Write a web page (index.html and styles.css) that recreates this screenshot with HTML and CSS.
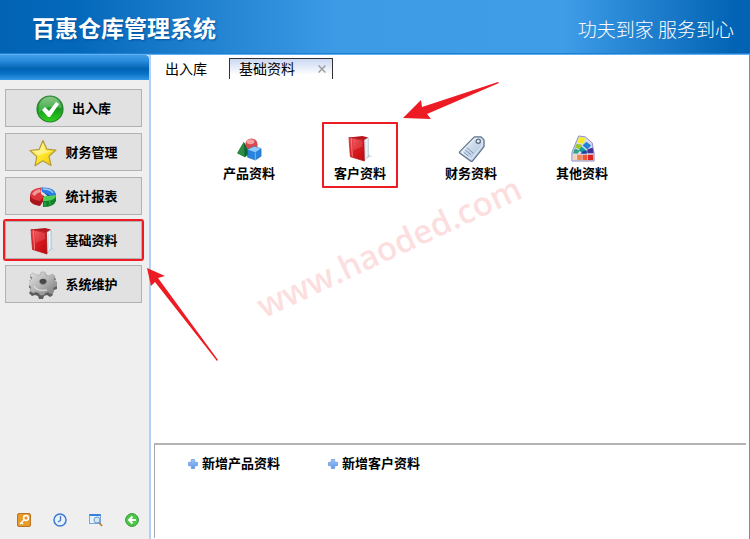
FILE: index.html
```html
<!DOCTYPE html>
<html lang="zh-CN">
<head>
<meta charset="utf-8">
<meta name="viewport" content="width=device-width, initial-scale=1">
<title>百惠仓库管理系统</title>
<link rel="stylesheet" href="styles.css">
</head>
<body>
<svg class="defs" width="0" height="0" aria-hidden="true">
  <defs>
    <linearGradient id="red" x1="0" y1="0" x2="1" y2="1"><stop offset="0" stop-color="#f0565a"/><stop offset=".45" stop-color="#dc1c22"/><stop offset="1" stop-color="#b80a10"/></linearGradient>
    <linearGradient id="green" x1="0" y1="0" x2="0" y2="1"><stop offset="0" stop-color="#6db96a"/><stop offset=".5" stop-color="#159a1c"/><stop offset="1" stop-color="#2cd41c"/></linearGradient>
    <linearGradient id="gold" x1="0" y1="0" x2="1" y2="1"><stop offset="0" stop-color="#fff79a"/><stop offset=".5" stop-color="#ffe72e"/><stop offset="1" stop-color="#f5c400"/></linearGradient>
    <linearGradient id="steel" x1="0" y1="0" x2="1" y2="1"><stop offset="0" stop-color="#e4e4e4"/><stop offset=".5" stop-color="#b5b5b5"/><stop offset="1" stop-color="#777"/></linearGradient>
    <linearGradient id="tag" x1="0" y1="0" x2="1" y2="1"><stop offset="0" stop-color="#eef4fb"/><stop offset="1" stop-color="#a3bcd8"/></linearGradient>
    <linearGradient id="plus" x1="0" y1="0" x2="0" y2="1"><stop offset="0" stop-color="#9cc6fb"/><stop offset="1" stop-color="#5b98ee"/></linearGradient>
    <symbol id="book" viewBox="0 0 28 28">
      <path d="M19 25l7-3-4-2z" fill="#d5d9de"/>
      <path d="M2 2.500L16 1l6 1.500-4 3z" fill="#b9161c"/>
      <path d="M17.500 5.500L22 3v19l-4 4z" fill="#f2f9fc" stroke="#8fb0bf" stroke-width=".7"/>
      <path d="M19.500 6v17" stroke="#bdd0da" stroke-width=".6"/>
      <path d="M2 2.500l15.500 3 .5 21.500L3.500 22.500z" fill="url(#red)" stroke="#b01016" stroke-width=".7" stroke-linejoin="round"/>
      <path d="M4.500 3.500l1 19" stroke="#f08a8c" stroke-width=".9"/>
      <path d="M6 4l10 2v6L6.500 16z" fill="#fff" opacity=".14"/>
    </symbol>
    <symbol id="plusmark" viewBox="0 0 10 10"><path d="M3.300.5h3.400v2.800h2.800v3.400H6.700v2.800H3.300V6.700H.5V3.300h2.800z" fill="url(#plus)" stroke="#6a95d8" stroke-width=".7" stroke-linejoin="round"/></symbol>
  </defs>
</svg>

<header class="banner">
  <h1>百惠仓库管理系统</h1>
  <p class="slogan">功夫到家 服务到心</p>
</header>

<div class="workspace">
  <aside class="sidebar">
    <div class="sidebar-cap"></div>
    <nav class="menu" aria-label="主菜单">
      <button type="button" class="menu-item">
        <svg viewBox="0 0 28 28"><circle cx="14" cy="14" r="13" fill="url(#green)" stroke="#2b7f34" stroke-width="1.200"/><path d="M3 13a11 11 0 0 1 22 0q-11-4-22 4z" fill="#fff" opacity=".22"/><path d="M6 15l3-3 4 4 7-9 3 2-9 13h-2z" fill="#fff"/></svg>
        <span>出入库</span>
      </button>
      <button type="button" class="menu-item">
        <svg viewBox="0 0 28 28"><path d="M14 1.500l3.700 8.600 9.200.9-6.900 6.300 2 9.200-8.200-4.700-7.800 5 1.800-9.200L1 11.500l9.200-1.200z" fill="url(#gold)" stroke="#b39a3c" stroke-width="1.200" stroke-linejoin="round"/><path d="M14 4l2.500 7.500 7 .8-14 4-5-4 6.500-1z" fill="#fff" opacity=".4"/></svg>
        <span>财务管理</span>
      </button>
      <button type="button" class="menu-item">
        <svg viewBox="0 0 28 28"><path d="M14 9q9 0 13 2v6q-3 1-5-1z" fill="#154aa8"/><path d="M12 4.500q13-1 15 6.500 0 3-2 4l-7-4-5-2z" fill="#2c7be4"/><path d="M14 6q8 0 10 4" fill="none" stroke="#a4d0ff" stroke-width="1.300"/><path d="M1 12v6q2 4 10 5l4-6v-4z" fill="#a8151b"/><path d="M12 4.500Q1 6 1 12q1 5 10 6l4-5-3-2z" fill="#dd353a"/><path d="M3 11q2-4 8-5l1 3q-5 1-6 4z" fill="#fff" opacity=".5"/><path d="M14 15v9q11 0 13-6v-5l-7 2z" fill="#11812a"/><path d="M14 15q1-3 5-2l8-1q0 6-13 6z" fill="#4fd055"/><path d="M16 19v4m5-5v4" stroke="#35b048" stroke-width="1.200"/></svg>
        <span>统计报表</span>
      </button>
      <button type="button" class="menu-item is-marked">
        <svg><use href="#book"/></svg>
        <span>基础资料</span>
      </button>
      <button type="button" class="menu-item">
        <svg viewBox="0 0 28 28"><path id="gear" d="M11 6l1-3h5l1 3 3 1 3-2 3 3-2 3 1 2 2 1v4l-3 1-2 2 1 3-3 2-3-2-3 1-1 3h-4l-1-3-3-1-3 1-3-3 2-3-1-2-2-1v-4l3-1 1-2-2-3 3-2 4 2z" fill="#5c5c5c"/><path d="M11 4l1-3h4l1 3 3 1 3-2 3 2-1 3 1 2 2 1v4l-3 1-1 2 1 3-3 2-3-2-3 1-1 2h-4l-1-2-3-1-3 1-3-2 1-3-1-2-2-1v-4l3-1 1-2-2-3 3-2 3 2z" fill="url(#steel)" stroke="#999" stroke-width=".5"/><ellipse cx="14" cy="10.500" rx="3.500" ry="2.700" fill="#484848"/><path d="M11 11.500q3 3 6 0v1.500q-3 2-6 0z" fill="#8a8a8a"/><path d="M5 15q3 6 13 4" fill="none" stroke="#f1f1f1" stroke-width="1.400" opacity=".6"/></svg>
        <span>系统维护</span>
      </button>
    </nav>
    <div class="tools">
      <button type="button" aria-label="密码"><svg viewBox="0 0 14 14"><rect x=".5" y=".5" width="13" height="13" rx="1.500" fill="#e99b27" stroke="#b67424"/><circle cx="9" cy="5" r="2.400" fill="none" stroke="#fff" stroke-width="1.500"/><path d="M7 7l-4 4M4.500 9.500l1.500 1.500" stroke="#fff" stroke-width="1.500"/></svg></button>
      <button type="button" aria-label="时间"><svg viewBox="0 0 14 14"><circle cx="7" cy="7" r="6" fill="#e6f3ff" stroke="#3b78d5" stroke-width="1.500"/><path d="M7.500 3v4.500L5 9" fill="none" stroke="#4a72b5" stroke-width="1.300"/></svg></button>
      <button type="button" aria-label="查询"><svg viewBox="0 0 14 14"><rect x=".5" y="1.500" width="11" height="9" fill="#e5f1fc" stroke="#78a8df"/><path d="M.5 1h11v2H.5z" fill="#3680dc"/><circle cx="8" cy="7" r="3" fill="#d2e8fa" stroke="#6e96be"/><path d="M10 9.500l3 3.500" stroke="#b6813e" stroke-width="1.800"/></svg></button>
      <button type="button" aria-label="退出"><svg viewBox="0 0 14 14"><circle cx="7" cy="7" r="6.400" fill="#4dc546" stroke="#32983a" stroke-width="1"/><path d="M11 7H4M7.500 3.500L4 7l3.500 3.500" fill="none" stroke="#fff" stroke-width="1.900"/></svg></button>
    </div>
  </aside>

  <main class="content">
    <div class="tabs">
      <button type="button" class="tab">出入库</button>
      <div class="tab is-active">
        <button type="button" class="tab-name">基础资料</button>
        <button type="button" class="tab-close" aria-label="关闭"><svg viewBox="0 0 7 7"><path d="M.5.5l6 6m0-6l-6 6" stroke="#9a9a9a" stroke-width="1.200"/></svg></button>
      </div>
    </div>

    <div class="modules">
      <button type="button" class="module">
        <svg viewBox="0 0 28 28"><circle cx="16" cy="10" r="6.500" fill="#d64a50"/><ellipse cx="15" cy="7" rx="4" ry="2.500" fill="#f4a2a4"/><path d="M8 7L1 19l8 4 5-4z" fill="#2a8b45"/><path d="M8 7l1 16 5-4z" fill="#146530"/><path d="M12 15l7-3 7 2v8l-6 4-8-3z" fill="#2684dc" stroke="#1762ac" stroke-width=".6"/><path d="M12 15l7-3 7 2-6 4z" fill="#8fc9fa"/><path d="M20 18v8" stroke="#8fc9fa" stroke-width=".8"/></svg>
        <span>产品资料</span>
      </button>
      <button type="button" class="module is-marked">
        <svg><use href="#book"/></svg>
        <span>客户资料</span>
      </button>
      <button type="button" class="module">
        <svg viewBox="0 0 28 28"><path d="M17 2l7 0 3 3v7L15 27q-1 1-2 0L2 19q-1-1 0-2z" fill="url(#tag)" stroke="#62758f" stroke-width="1.300" stroke-linejoin="round"/><path d="M17 4l6 0 2 2v5L14 25 4 18z" fill="none" stroke="#fff" stroke-width=".9" opacity=".8"/><circle cx="21" cy="6.500" r="2.200" fill="#dfe7f0" stroke="#5c6c82" stroke-width="1.300"/><path d="M9 13l7 6M7.500 15.500l6 5M6 18l5 4" stroke="#7a90b2" stroke-width="1"/></svg>
        <span>财务资料</span>
      </button>
      <button type="button" class="module">
        <svg viewBox="0 0 28 28"><path d="M10 1l7 1 7 6 2 11v8H3v-9z" fill="#dcdaf0" stroke="#8f8cbc" stroke-width="1"/><path d="M10.500 2l6 1-1 6-6.500-1z" fill="#f7ee18"/><path d="M8 9l5.500 1-2 5L6 13z" fill="#9ac82b"/><path d="M6 14l5 2-2 3.500-5-.5z" fill="#2ba68b"/><path d="M18 7l5 4-4 4-5-4z" fill="#2381d6"/><path d="M13 12l5 4-3 3-5-3z" fill="#159a9c"/><path d="M19 15l5.500-2 1 6H19z" fill="#423099"/><path d="M14 17l4.500-1v3.500H12z" fill="#1d4298"/><path d="M4 20.500h4V26H4z" fill="#f7d5b2"/><path d="M8.500 20.500h4.800V26H8.500z" fill="#ed8751"/><path d="M14 20.500h5V26h-5z" fill="#ed5a32"/><path d="M19.700 20.500H25V26h-5.300z" fill="#dc2525"/></svg>
        <span>其他资料</span>
      </button>
    </div>

    <footer class="shortcuts">
      <button type="button"><svg><use href="#plusmark"/></svg><span>新增产品资料</span></button>
      <button type="button"><svg><use href="#plusmark"/></svg><span>新增客户资料</span></button>
    </footer>
  </main>
</div>

<div class="watermark">www.haoded.com</div>
<svg class="arrow arrow-module" viewBox="0 0 98 40" aria-hidden="true"><path d="M1 37L19 19l1 7L96 1l1 1L25 33l4 5z"/></svg>
<svg class="arrow arrow-menu" viewBox="0 0 74 96" aria-hidden="true"><path d="M1 1l18 8-7 2L72 93l-1 1L9 15l-4 4z"/></svg>
</body>
</html>
```
FILE: styles.css
```css
* {
  box-sizing: border-box;
}

body {
  position: relative;
  display: flex;
  flex-direction: column;
  min-height: 100vh;
  margin: 0;
  background: #fff;
  color: #000;
  font-family: "Liberation Sans", "Noto Sans CJK SC", sans-serif;
  font-size: 13px;
  line-height: 16px;
}

button {
  margin: 0;
  padding: 0;
  border: 0;
  background: none;
  color: inherit;
  font: inherit;
}

svg {
  display: block;
  flex: none;
}

.defs {
  position: absolute;
}

.banner {
  display: flex;
  align-items: center;
  justify-content: space-between;
  height: 55px;
  padding: 4px 16px 0 32px;
  border-bottom: 1px solid #5fb0f3;
  background: linear-gradient(90deg, #0263b4 0%, #0468ba 10%, #3d9be6 45%, #3f9de8 75%, #0263b4 98%);
  box-shadow: inset 0 -1px #1f7fd0;
  color: #fff;
}

.banner h1 {
  margin: 0;
  font-size: 23px;
  line-height: 32px;
  text-shadow: 1px 1px 2px #04509a;
}

.slogan {
  margin: 0;
  font-family: "Noto Sans CJK SC", sans-serif;
  font-size: 19px;
  font-weight: 300;
  line-height: 28px;
}

.workspace {
  display: flex;
  flex: 1;
  border-right: 1px solid #8a8a8a;
}

.sidebar {
  display: flex;
  flex: none;
  flex-direction: column;
  width: 151px;
  border-right: 2px solid #b3cff2;
  background: #efefef;
}

.sidebar-cap {
  height: 25px;
  border-top-right-radius: 4px;
  background: linear-gradient(#419eea 0%, #288adb 25%, #0262b2 55%, #0872c7 75%, #3697e5 100%);
}

.menu {
  display: flex;
  flex-direction: column;
  gap: 6px;
  padding: 9px 7px 0 5px;
}

.menu-item {
  display: flex;
  align-items: center;
  justify-content: center;
  gap: 8px;
  height: 38px;
  padding-top: 1px;
  border: 1px solid #b2b2b2;
  background: #e1e1e1;
  font-weight: bold;
}

.menu-item svg {
  width: 28px;
  height: 28px;
}

.menu-item.is-marked {
  border-radius: 1px;
  outline: 2px solid #ed1c24;
}

.tools {
  display: flex;
  gap: 22px;
  margin-top: auto;
  padding: 0 17px 12px;
}

.tools svg {
  width: 14px;
  height: 14px;
}

.content {
  display: flex;
  flex: 1;
  flex-direction: column;
  min-width: 0;
  padding: 3px 3px 1px;
}

.tabs {
  display: flex;
  height: 21px;
  font-size: 14px;
  line-height: 20px;
}

.tab {
  display: flex;
  align-items: center;
  padding: 0 11px;
}

.tab.is-active {
  justify-content: space-between;
  width: 104px;
  margin-left: 11px;
  padding: 0 6px 0 9px;
  border: 1px solid #333;
  border-bottom: 0;
  background: linear-gradient(#cbd8f3, #fff 80%);
}

.tab-close svg {
  width: 8px;
  height: 8px;
}

.modules {
  display: flex;
  flex: 1;
  align-items: flex-start;
  gap: 35px;
  padding: 43px 57px 0;
}

.module {
  display: flex;
  flex-direction: column;
  align-items: center;
  gap: 4px;
  width: 76px;
  height: 66px;
  padding-top: 13px;
  font-weight: bold;
}

.module svg {
  width: 27px;
  height: 27px;
}

.module.is-marked {
  border-radius: 1px;
  outline: 2px solid #ed1c24;
  outline-offset: -2px;
}

.shortcuts {
  display: flex;
  align-items: flex-start;
  gap: 48px;
  height: 95px;
  padding: 11px 33px;
  border-top: 2px solid #b4b4b4;
  border-left: 1px solid #a9a9a9;
}

.shortcuts button {
  display: flex;
  align-items: center;
  gap: 4px;
  font-weight: bold;
}

.shortcuts svg {
  width: 10px;
  height: 10px;
}

.watermark {
  position: absolute;
  top: 225px;
  left: 244px;
  width: 290px;
  color: #ed1c24;
  font-family: "Open Sans", sans-serif;
  font-size: 33px;
  font-weight: 600;
  line-height: 44px;
  text-align: center;
  white-space: nowrap;
  opacity: 0.14;
  transform: rotate(-25deg);
  pointer-events: none;
}

.arrow {
  position: absolute;
  fill: #ed1c24;
  pointer-events: none;
}

.arrow-module {
  top: 81px;
  left: 402px;
  width: 98px;
  height: 40px;
}

.arrow-menu {
  top: 267px;
  left: 146px;
  width: 74px;
  height: 96px;
}
```
